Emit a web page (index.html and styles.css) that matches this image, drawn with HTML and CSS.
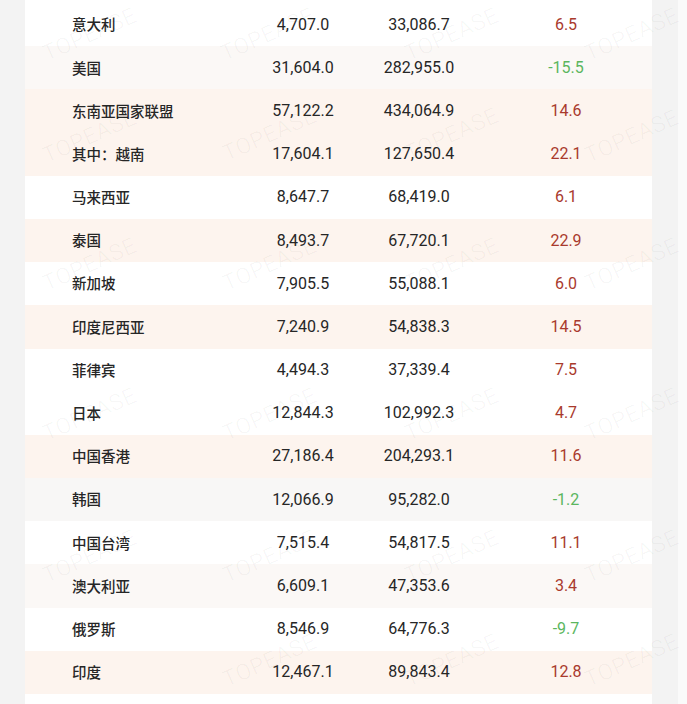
FILE: index.html
```html
<!DOCTYPE html>
<html lang="zh-CN">
<head>
<meta charset="utf-8">
<title>进出口数据</title>
<link rel="stylesheet" href="styles.css">
</head>
<body>
<div class="page">
  <div class="card">
    <div class="rows">
      <div class="row"><span class="name">意大利</span><span class="num">4,707.0</span><span class="num">33,086.7</span><span class="pct up">6.5</span></div>
      <div class="row soft"><span class="name">美国</span><span class="num">31,604.0</span><span class="num">282,955.0</span><span class="pct down">-15.5</span></div>
      <div class="row peach"><span class="name">东南亚国家联盟</span><span class="num">57,122.2</span><span class="num">434,064.9</span><span class="pct up">14.6</span></div>
      <div class="row peach"><span class="name">其中：越南</span><span class="num">17,604.1</span><span class="num">127,650.4</span><span class="pct up">22.1</span></div>
      <div class="row"><span class="name">马来西亚</span><span class="num">8,647.7</span><span class="num">68,419.0</span><span class="pct up">6.1</span></div>
      <div class="row peach"><span class="name">泰国</span><span class="num">8,493.7</span><span class="num">67,720.1</span><span class="pct up">22.9</span></div>
      <div class="row"><span class="name">新加坡</span><span class="num">7,905.5</span><span class="num">55,088.1</span><span class="pct up">6.0</span></div>
      <div class="row peach"><span class="name">印度尼西亚</span><span class="num">7,240.9</span><span class="num">54,838.3</span><span class="pct up">14.5</span></div>
      <div class="row"><span class="name">菲律宾</span><span class="num">4,494.3</span><span class="num">37,339.4</span><span class="pct up">7.5</span></div>
      <div class="row"><span class="name">日本</span><span class="num">12,844.3</span><span class="num">102,992.3</span><span class="pct up">4.7</span></div>
      <div class="row peach"><span class="name">中国香港</span><span class="num">27,186.4</span><span class="num">204,293.1</span><span class="pct up">11.6</span></div>
      <div class="row grey"><span class="name">韩国</span><span class="num">12,066.9</span><span class="num">95,282.0</span><span class="pct down">-1.2</span></div>
      <div class="row"><span class="name">中国台湾</span><span class="num">7,515.4</span><span class="num">54,817.5</span><span class="pct up">11.1</span></div>
      <div class="row soft"><span class="name">澳大利亚</span><span class="num">6,609.1</span><span class="num">47,353.6</span><span class="pct up">3.4</span></div>
      <div class="row"><span class="name">俄罗斯</span><span class="num">8,546.9</span><span class="num">64,776.3</span><span class="pct down">-9.7</span></div>
      <div class="row peach"><span class="name">印度</span><span class="num">12,467.1</span><span class="num">89,843.4</span><span class="pct up">12.8</span></div>
      <div class="row"><span class="name"></span><span class="num"></span><span class="num"></span><span class="pct"></span></div>
    </div>
  </div>
  <div class="marks">
    <span class="wm" style="left:44px;top:22px">TOPEASE</span>
    <span class="wm" style="left:222px;top:22px">TOPEASE</span>
    <span class="wm" style="left:406px;top:22px">TOPEASE</span>
    <span class="wm" style="left:586px;top:22px">TOPEASE</span>
    <span class="wm" style="left:44px;top:124px">TOPEASE</span>
    <span class="wm" style="left:224px;top:122px">TOPEASE</span>
    <span class="wm" style="left:406px;top:122px">TOPEASE</span>
    <span class="wm" style="left:586px;top:124px">TOPEASE</span>
    <span class="wm" style="left:44px;top:252px">TOPEASE</span>
    <span class="wm" style="left:224px;top:252px">TOPEASE</span>
    <span class="wm" style="left:406px;top:252px">TOPEASE</span>
    <span class="wm" style="left:586px;top:252px">TOPEASE</span>
    <span class="wm" style="left:44px;top:402px">TOPEASE</span>
    <span class="wm" style="left:224px;top:402px">TOPEASE</span>
    <span class="wm" style="left:406px;top:402px">TOPEASE</span>
    <span class="wm" style="left:586px;top:402px">TOPEASE</span>
    <span class="wm" style="left:44px;top:544px">TOPEASE</span>
    <span class="wm" style="left:224px;top:544px">TOPEASE</span>
    <span class="wm" style="left:406px;top:544px">TOPEASE</span>
    <span class="wm" style="left:586px;top:544px">TOPEASE</span>
    <span class="wm" style="left:224px;top:648px">TOPEASE</span>
    <span class="wm" style="left:406px;top:648px">TOPEASE</span>
    <span class="wm" style="left:586px;top:648px">TOPEASE</span>
  </div>
</div>
</body>
</html>
```

FILE: styles.css
```css
* { box-sizing: border-box; }
html, body {
  margin: 0;
  padding: 0;
  background: #f3f3f3;
  overflow: hidden;
}
.page {
  position: relative;
  width: 687px;
  height: 704px;
  padding-left: 25px;
  background: linear-gradient(to right, #f3f3f3 0, #f3f3f3 678px, #fafafa 678px);
  overflow: hidden;
}
.card {
  width: 627px;
  height: 704px;
  background: #ffffff;
  padding-top: 3px;
}
.rows {
  display: flex;
  flex-direction: column;
}
.row {
  display: grid;
  grid-template-columns: 186px 90px 142px 152px;
  align-items: center;
  height: 43.2px;
  padding-left: 47px;
  background: #ffffff;
}
.row.peach { background: #fdf4ee; }
.row.soft { background: #fbf8f6; }
.row.grey { background: #f8f7f6; }
.name {
  font-family: "Noto Sans CJK SC", "Noto Sans", sans-serif;
  font-size: 14.5px;
  font-weight: 500;
  color: #262626;
  line-height: 1;
  white-space: nowrap;
}
.num, .pct {
  font-family: Roboto, "Noto Sans", sans-serif;
  font-size: 16px;
  color: #262626;
  text-align: center;
  line-height: 1;
}
.pct.up { color: #a93a2d; }
.pct.down { color: #5bb65e; }
.marks {
  position: absolute;
  inset: 0;
  pointer-events: none;
}
.wm {
  position: absolute;
  font-family: Roboto, "Noto Sans", sans-serif;
  font-weight: 300;
  font-size: 22px;
  letter-spacing: 1px;
  color: rgba(0, 0, 0, 0.05);
  transform: rotate(-24deg);
  transform-origin: left center;
  margin-top: 20px;
  white-space: nowrap;
}
```
